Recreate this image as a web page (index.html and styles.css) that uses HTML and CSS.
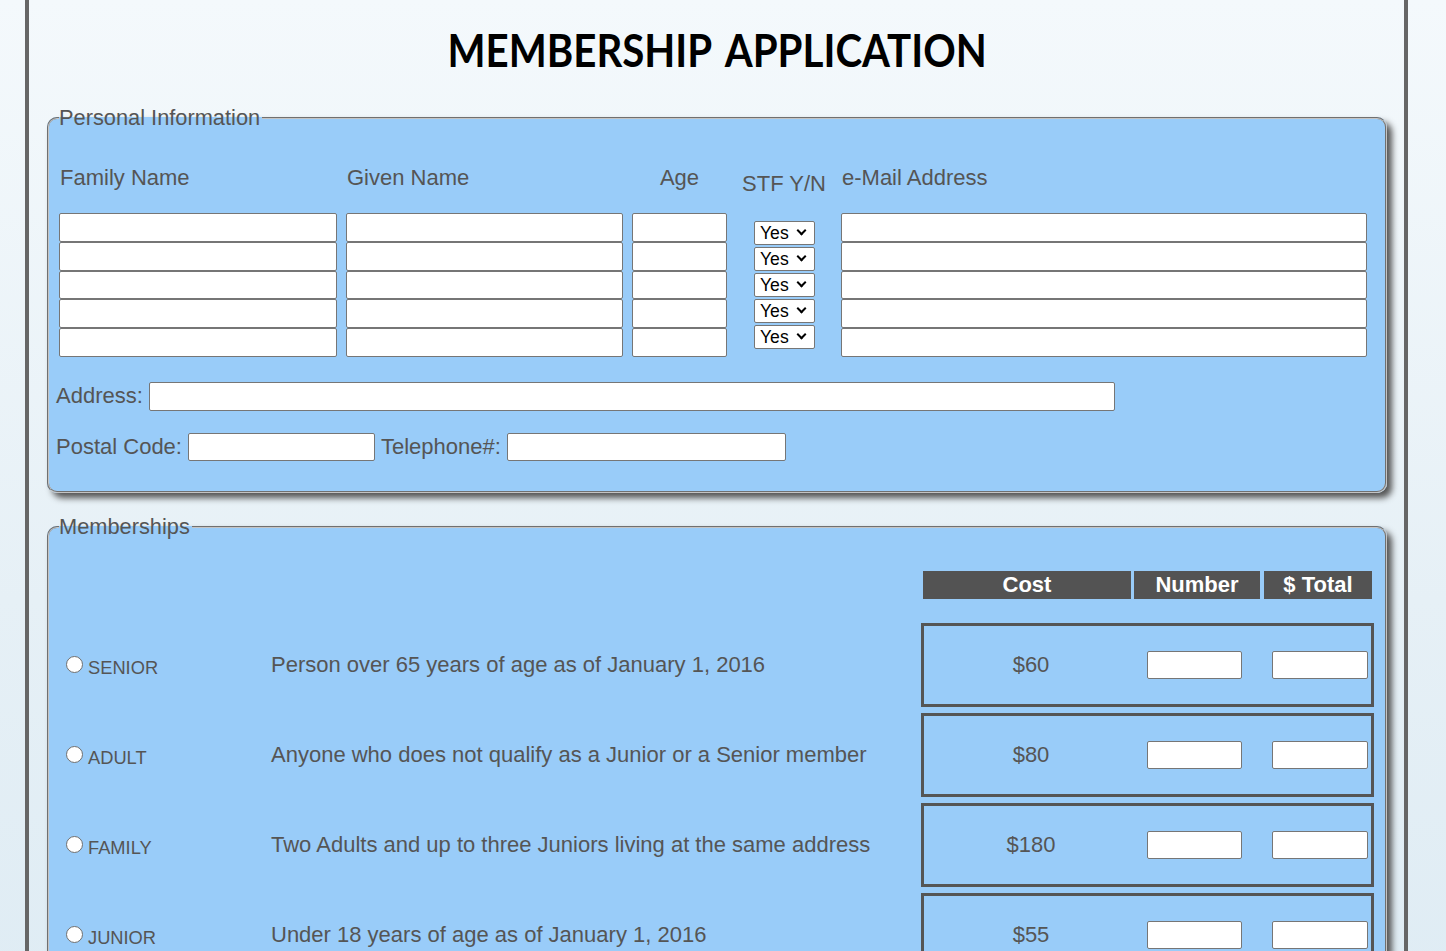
FILE: index.html
```html
<!DOCTYPE html>
<html lang="en">
<head>
<meta charset="utf-8">
<title>Membership Application</title>
<link rel="stylesheet" href="styles.css">
</head>
<body>
<div class="page">
  <h1 class="title"><span class="title-text">MEMBERSHIP APPLICATION</span></h1>

  <fieldset class="panel personal">
    <legend>Personal Information</legend>
    <div class="people">
      <div class="col-head">Family Name</div>
      <div class="col-head">Given Name</div>
      <div class="col-head centered">Age</div>
      <div class="col-head centered stf">STF Y/N</div>
      <div class="col-head">e-Mail Address</div>

      <div class="stack">
        <input type="text"><input type="text"><input type="text"><input type="text"><input type="text">
      </div>
      <div class="stack">
        <input type="text"><input type="text"><input type="text"><input type="text"><input type="text">
      </div>
      <div class="stack">
        <input type="text"><input type="text"><input type="text"><input type="text"><input type="text">
      </div>
      <div class="select-stack">
        <span class="sel"><select><option>Yes</option><option>No</option></select></span>
        <span class="sel"><select><option>Yes</option><option>No</option></select></span>
        <span class="sel"><select><option>Yes</option><option>No</option></select></span>
        <span class="sel"><select><option>Yes</option><option>No</option></select></span>
        <span class="sel"><select><option>Yes</option><option>No</option></select></span>
      </div>
      <div class="stack">
        <input type="text"><input type="text"><input type="text"><input type="text"><input type="text">
      </div>
    </div>

    <div class="line address-line">
      <label>Address:</label>
      <input type="text" class="address">
    </div>
    <div class="line postal-line">
      <label>Postal Code:</label>
      <input type="text" class="postal">
      <label>Telephone#:</label>
      <input type="text" class="phone">
    </div>
  </fieldset>

  <fieldset class="panel memberships">
    <legend>Memberships</legend>
    <div class="mrow mhead">
      <div></div>
      <div></div>
      <div class="heads">
        <div class="head cost-h">Cost</div>
        <div class="head num-h">Number</div>
        <div class="head tot-h">$ Total</div>
      </div>
    </div>

    <div class="mrow">
      <label class="type"><input type="radio" name="mtype"><span>SENIOR</span></label>
      <div class="desc">Person over 65 years of age as of January 1, 2016</div>
      <div class="box"><div class="cost">$60</div><input type="text" class="num"><input type="text" class="tot"></div>
    </div>
    <div class="mrow">
      <label class="type"><input type="radio" name="mtype"><span>ADULT</span></label>
      <div class="desc">Anyone who does not qualify as a Junior or a Senior member</div>
      <div class="box"><div class="cost">$80</div><input type="text" class="num"><input type="text" class="tot"></div>
    </div>
    <div class="mrow">
      <label class="type"><input type="radio" name="mtype"><span>FAMILY</span></label>
      <div class="desc">Two Adults and up to three Juniors living at the same address</div>
      <div class="box"><div class="cost">$180</div><input type="text" class="num"><input type="text" class="tot"></div>
    </div>
    <div class="mrow">
      <label class="type"><input type="radio" name="mtype"><span>JUNIOR</span></label>
      <div class="desc">Under 18 years of age as of January 1, 2016</div>
      <div class="box"><div class="cost">$55</div><input type="text" class="num"><input type="text" class="tot"></div>
    </div>
  </fieldset>
</div>
</body>
</html>
```

FILE: styles.css
```css
html, body {
  margin: 0;
  padding: 0;
}
body {
  min-height: 100vh;
  background: linear-gradient(to bottom, #f4f9fc 0%, #e6f0f6 50%, #dbeaf3 100%);
  font-family: "Liberation Sans", Arial, sans-serif;
  color: #555;
}
.page {
  box-sizing: border-box;
  margin-left: 25px;
  width: 1383px;
  min-height: 1200px;
  border-left: 4px solid #666;
  border-right: 4px solid #666;
  padding: 22px 17px 40px 18px;
}
.title {
  margin: 0 0 28px 0;
  font-family: Lato, "Liberation Sans", sans-serif;
  font-weight: 700;
  font-size: 46px;
  line-height: 56px;
  text-align: center;
  color: #000;
}
.title-text {
  display: inline-block;
  word-spacing: 6px;
  transform: scaleX(0.875);
  transform-origin: center;
}
.panel {
  margin: 0;
  border: 2px groove #c4c4c4;
  border-radius: 10px;
  background: #99ccf9;
  box-shadow: 5px 5px 6px #555;
  padding: 0 0 0 10px;
  min-width: 0;
}
.panel legend {
  padding: 0 2px 0 0;
  font-size: 21.8px;
  line-height: 24px;
  color: #555;
}
.personal {
  padding-top: 23px;
  padding-bottom: 30px;
}
.people {
  display: grid;
  grid-template-columns: 278px 277px 95px 96px 526px;
  grid-template-rows: 50px auto;
  column-gap: 9px;
  row-gap: 10px;
}
.col-head {
  font-size: 22px;
  display: flex;
  align-items: center;
  padding-left: 1px;
}
.col-head.centered {
  justify-content: center;
  padding-left: 0;
}
.col-head.stf {
  padding-top: 12px;
}
.stack {
  display: flex;
  flex-direction: column;
}
.stack input {
  height: 28.8px;
}
input[type="text"] {
  box-sizing: border-box;
  margin: 0;
  border: 1px solid #767676;
  border-radius: 2px;
  background: #fff;
  padding: 1px 3px;
  font-family: "Liberation Sans", Arial, sans-serif;
  font-size: 16px;
}
.select-stack {
  display: flex;
  flex-direction: column;
  align-items: center;
  justify-content: center;
  gap: 2px;
}
.sel {
  position: relative;
  display: block;
  width: 61px;
  height: 24px;
  margin-left: 1px;
}
.sel::after {
  content: "";
  position: absolute;
  left: 44px;
  top: 6px;
  width: 5px;
  height: 5px;
  border-right: 2px solid #000;
  border-bottom: 2px solid #000;
  transform: rotate(45deg);
  pointer-events: none;
}
.sel select {
  appearance: none;
  -webkit-appearance: none;
  box-sizing: border-box;
  display: block;
  width: 61px;
  height: 24px;
  margin: 0;
  padding: 0 0 0 5px;
  font-family: "Liberation Sans", Arial, sans-serif;
  font-size: 17.6px;
  color: #000;
  background: #fff;
  border: 1px solid #767676;
  border-radius: 2px;
}
.line {
  display: flex;
  align-items: center;
  gap: 6px;
  margin-left: -3px;
  font-size: 22px;
}
.address-line {
  margin-top: 25px;
  height: 29px;
}
.address-line .address {
  width: 966px;
  height: 29px;
}
.postal-line {
  margin-top: 22px;
  height: 28px;
}
.postal-line input {
  height: 28px;
}
.postal { width: 187px; }
.phone { width: 279px; }

.memberships {
  margin-top: 22px;
  padding-top: 32px;
  padding-bottom: 40px;
}
.mrow {
  display: grid;
  grid-template-columns: 212px 650px 453px;
  align-items: center;
  height: 84px;
  margin-bottom: 6px;
}
.mrow.mhead {
  height: 28px;
  margin-bottom: 24px;
}
.heads {
  display: flex;
  margin-left: 2px;
  height: 28px;
}
.head {
  background: #535353;
  color: #fff;
  font-weight: 700;
  font-size: 22px;
  line-height: 28px;
  text-align: center;
}
.cost-h { width: 208px; }
.num-h { width: 126px; margin-left: 3px; }
.tot-h { width: 108px; margin-left: 4px; }

.type {
  display: flex;
  align-items: center;
  padding-left: 7px;
  font-size: 18.3px;
  color: #555;
}
.type input[type="radio"] {
  appearance: none;
  -webkit-appearance: none;
  width: 17px;
  height: 17px;
  margin: 0 5px 0 0;
  border: 1px solid #6f6f6f;
  border-radius: 50%;
  background: #fff;
  box-sizing: border-box;
}
.type span {
  margin-top: 6px;
}
.desc {
  font-size: 22px;
  color: #555;
}
.box {
  box-sizing: border-box;
  height: 84px;
  border: 3px solid #555;
  display: flex;
  align-items: center;
}
.cost {
  width: 214px;
  text-align: center;
  font-size: 22px;
  color: #555;
}
.box input {
  height: 28px;
}
.num {
  width: 95px;
  margin-left: 9px !important;
}
.tot {
  width: 96px;
  margin-left: 30px !important;
}
```
